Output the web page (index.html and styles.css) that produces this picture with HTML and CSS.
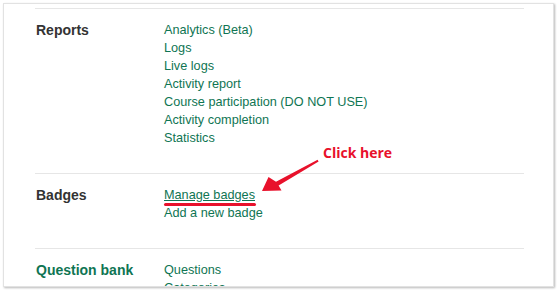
FILE: index.html
```html
<!DOCTYPE html>
<html lang="en">
<head>
  <meta charset="UTF-8" />
  <title>Course administration</title>
  <link rel="stylesheet" href="styles.css">
</head>
<body>
  <div class="panel">
    <div class="section">
      <h3 class="label">Reports</h3>
      <ul class="links">
        <li><a href="#">Analytics (Beta)</a></li>
        <li><a href="#">Logs</a></li>
        <li><a href="#">Live logs</a></li>
        <li><a href="#">Activity report</a></li>
        <li><a href="#">Course participation (DO NOT USE)</a></li>
        <li><a href="#">Activity completion</a></li>
        <li><a href="#">Statistics</a></li>
      </ul>
    </div>

    <div class="section">
      <h3 class="label">Badges</h3>
      <ul class="links">
        <li><a href="#" class="marked">Manage badges</a></li>
        <li><a href="#">Add a new badge</a></li>
      </ul>
    </div>

    <div class="section">
      <h3 class="label green">Question bank</h3>
      <ul class="links">
        <li><a href="#">Questions</a></li>
        <li><a href="#">Categories</a></li>
        <li><a href="#">Import</a></li>
      </ul>
    </div>
  </div>

  <!-- annotation layer -->
  <div class="note">Click here</div>
  <svg class="arrow" width="559" height="292" viewBox="0 0 559 292">
    <polygon fill="#e8112b" points="262,191 268.5,177 276,181.8 317.6,159.8 318.6,161.6 278.6,185.6 281.5,190.5"/>
  </svg>
</body>
</html>
```

FILE: styles.css
```css
* {
  box-sizing: border-box;
}

body {
  margin: 0;
  background: #fff;
  font-family: 'Liberation Sans', Arial, sans-serif;
  position: relative;
  width: 559px;
  height: 292px;
  overflow: hidden;
}

.panel {
  margin: 3px 0 0 3px;
  width: 551px;
  height: 284px;
  padding: 4px 29px 0 31px;
  background: #fff;
  border: 1px solid #e2e2e2;
  box-shadow: 1px 1px 2px rgba(0,0,0,0.28);
  overflow: hidden;
}

.section {
  display: flex;
  border-top: 1px solid #e6e6e6;
  padding: 12px 0 26px;
}

.label {
  width: 129px;
  flex-shrink: 0;
  margin: 0;
  padding-left: 1px;
  font-size: 14px;
  line-height: 18px;
  font-weight: bold;
  color: #333;
}

.label.green {
  color: #0f7553;
}

.links {
  list-style: none;
  margin: 0;
  padding: 0;
  font-size: 12.7px;
  line-height: 18px;
}

.links a {
  color: #0f7553;
  text-decoration: none;
}

.links a.marked {
  position: relative;
  text-decoration: underline;
}

.links a.marked::after {
  content: '';
  position: absolute;
  left: 0;
  right: -1px;
  bottom: -4px;
  height: 3px;
  border-radius: 2px;
  background: #e8112b;
}

.note {
  position: absolute;
  left: 323px;
  top: 143px;
  font-family: 'Open Sans', sans-serif;
  font-size: 14px;
  font-weight: bold;
  line-height: 19px;
  color: #e8112b;
}

.arrow {
  position: absolute;
  left: 0;
  top: 0;
}
```
